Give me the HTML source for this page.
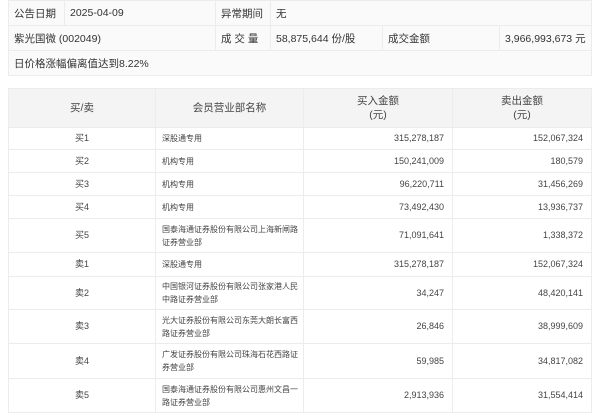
<!DOCTYPE html>
<html><head><meta charset="utf-8"><style>
*{margin:0;padding:0;box-sizing:border-box}
body{width:600px;height:417px;background:#fff;font-family:"Liberation Sans","Noto Sans CJK SC",sans-serif;color:#333;position:relative;overflow:hidden}
table{border-collapse:collapse;position:absolute;left:8px;width:584px;table-layout:fixed}
td,th{border:1px solid #ececec;font-weight:normal;white-space:nowrap}
#t1{top:0}
#t1 td{height:25px;font-size:10.5px;padding:0 5px;background:#fafafa}
#t2{top:88px}
#t2 th{background:#f4f4f4;height:39px;font-size:10.5px;line-height:14px;text-align:center;color:#444}
#t2 td{font-size:9px;line-height:13px;padding:0 4px;color:#444}
#t2 td.n{white-space:normal;font-size:8px;line-height:13px;padding:0 3px 0 6px}
#t2 td.c{text-align:center}
#t2 td.r{text-align:right;padding-right:8px}
</style></head><body>
<table id="t1">
<colgroup><col style="width:56px"><col style="width:151px"><col style="width:55px"><col style="width:112px"><col style="width:117px"><col></colgroup>
<tr><td>公告日期</td><td>2025-04-09</td><td>异常期间</td><td colspan="3">无</td></tr>
<tr><td colspan="2">紫光国微 (002049)</td><td>成 交 量</td><td>58,875,644 份/股</td><td>成交金额</td><td>3,966,993,673 元</td></tr>
<tr><td colspan="6">日价格涨幅偏离值达到8.22%</td></tr>
</table>
<table id="t2">
<colgroup><col style="width:147px"><col style="width:148px"><col style="width:149px"><col></colgroup>
<tr><th>买/卖</th><th>会员营业部名称</th><th>买入金额<br>(元)</th><th>卖出金额<br>(元)</th></tr>
<tr style="height:22px"><td class="c">买1</td><td class="n">深股通专用</td><td class="r">315,278,187</td><td class="r">152,067,324</td></tr>
<tr style="height:23px"><td class="c">买2</td><td class="n">机构专用</td><td class="r">150,241,009</td><td class="r">180,579</td></tr>
<tr style="height:23px"><td class="c">买3</td><td class="n">机构专用</td><td class="r">96,220,711</td><td class="r">31,456,269</td></tr>
<tr style="height:23px"><td class="c">买4</td><td class="n">机构专用</td><td class="r">73,492,430</td><td class="r">13,936,737</td></tr>
<tr style="height:34px"><td class="c">买5</td><td class="n">国泰海通证券股份有限公司上海新闸路证券营业部</td><td class="r">71,091,641</td><td class="r">1,338,372</td></tr>
<tr style="height:24px"><td class="c">卖1</td><td class="n">深股通专用</td><td class="r">315,278,187</td><td class="r">152,067,324</td></tr>
<tr style="height:33px"><td class="c">卖2</td><td class="n">中国银河证券股份有限公司张家港人民中路证券营业部</td><td class="r">34,247</td><td class="r">48,420,141</td></tr>
<tr style="height:34px"><td class="c">卖3</td><td class="n">光大证券股份有限公司东莞大朗长富西路证券营业部</td><td class="r">26,846</td><td class="r">38,999,609</td></tr>
<tr style="height:35px"><td class="c">卖4</td><td class="n">广发证券股份有限公司珠海石花西路证券营业部</td><td class="r">59,985</td><td class="r">34,817,082</td></tr>
<tr style="height:34px"><td class="c">卖5</td><td class="n">国泰海通证券股份有限公司惠州文昌一路证券营业部</td><td class="r">2,913,936</td><td class="r">31,554,414</td></tr>
</table>
</body></html>
